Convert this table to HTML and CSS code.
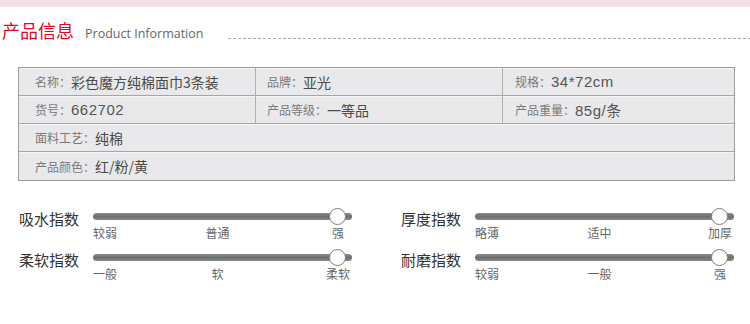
FILE: index.html
```html
<!DOCTYPE html>
<html lang="zh-CN">
<head>
<meta charset="utf-8">
<title>产品信息</title>
<link rel="stylesheet" href="styles.css">
</head>
<body>
<div class="band"></div>
<div class="heading">
  <h2 class="heading-cn">产品信息</h2>
  <span class="heading-en">Product Information</span>
  <span class="heading-rule"></span>
</div>

<div class="specs">
  <div class="cell col1"><span class="k">名称：</span><span class="v">彩色魔方纯棉面巾3条装</span></div>
  <div class="cell col2"><span class="k">品牌：</span><span class="v">亚光</span></div>
  <div class="cell col3"><span class="k">规格：</span><span class="v num">34*72cm</span></div>
  <div class="cell col1"><span class="k">货号：</span><span class="v num">662702</span></div>
  <div class="cell col2"><span class="k">产品等级：</span><span class="v">一等品</span></div>
  <div class="cell col3"><span class="k">产品重量：</span><span class="v num">85g/条</span></div>
  <div class="cell wide"><span class="k">面料工艺：</span><span class="v">纯棉</span></div>
  <div class="cell wide last"><span class="k">产品颜色：</span><span class="v">红/粉/黄</span></div>
</div>

<div class="meters">
  <div class="meter">
    <div class="meter-label">吸水指数</div>
    <div class="track"><span class="knob"></span></div>
    <div class="ticks"><span class="t-start">较弱</span><span class="t-mid">普通</span><span class="t-end">强</span></div>
  </div>
  <div class="meter">
    <div class="meter-label">厚度指数</div>
    <div class="track"><span class="knob"></span></div>
    <div class="ticks"><span class="t-start">略薄</span><span class="t-mid">适中</span><span class="t-end">加厚</span></div>
  </div>
  <div class="meter">
    <div class="meter-label">柔软指数</div>
    <div class="track"><span class="knob"></span></div>
    <div class="ticks"><span class="t-start">一般</span><span class="t-mid">软</span><span class="t-end">柔软</span></div>
  </div>
  <div class="meter">
    <div class="meter-label">耐磨指数</div>
    <div class="track"><span class="knob"></span></div>
    <div class="ticks"><span class="t-start">较弱</span><span class="t-mid">一般</span><span class="t-end">强</span></div>
  </div>
</div>
</body>
</html>
```

FILE: styles.css
```css
html, body {
  margin: 0;
  padding: 0;
  background: #ffffff;
}
body {
  width: 750px;
  height: 324px;
  overflow: hidden;
  font-family: "Noto Sans CJK SC", "Noto Sans", sans-serif;
  color: #333;
}

.band {
  height: 7px;
  background: #f2e1e4;
}

.heading {
  display: flex;
  align-items: baseline;
  margin: 13px 0 0 2px;
  height: 20px;
}
.heading-cn {
  margin: 0;
  font-size: 18px;
  line-height: 20px;
  font-weight: normal;
  color: #dc0a26;
}
.heading-en {
  margin-left: 11px;
  font-family: "Open Sans", "Noto Sans", sans-serif;
  font-size: 12.5px;
  line-height: 20px;
  color: #666;
}
.heading-rule {
  flex: 1;
  align-self: flex-end;
  height: 1px;
  margin: 0 0 1px 25px;
  background: linear-gradient(to right, #aaa 3px, transparent 3px) repeat-x;
  background-size: 5px 1px;
}

.specs {
  display: grid;
  grid-template-columns: 237px 247px 1fr;
  grid-auto-rows: 28px;
  width: 717px;
  box-sizing: border-box;
  margin: 27px 0 0 18px;
  border: 1px solid #9c9c9c;
  background: #e9e9eb;
}
.cell {
  display: flex;
  align-items: center;
  border-bottom: 1px solid #a6a6a6;
  box-shadow: inset 0 1px 0 #f6f6f7;
  white-space: nowrap;
}
.cell.last { border-bottom: none; }
.col1 { padding-left: 16px; border-right: 1px solid #b0b0b0; }
.col2 { padding-left: 11px; border-right: 1px solid #b0b0b0; }
.col3 { padding-left: 12px; }
.wide { grid-column: 1 / -1; padding-left: 16px; }
.k {
  font-size: 12px;
  color: #7a7a7a;
}
.v {
  font-size: 14px;
  color: #4a4a4a;
}
.v.num {
  font-family: "Liberation Sans", "Noto Sans CJK SC", sans-serif;
  font-size: 15px;
  letter-spacing: 0.5px;
  color: #555;
}

.meters {
  display: grid;
  grid-template-columns: 334px 334px;
  column-gap: 48px;
  row-gap: 9px;
  margin: 27px 0 0 19px;
}
.meter {
  display: grid;
  grid-template-columns: 74px 259px;
  grid-template-rows: 16px auto;
}
.meter-label {
  grid-row: 1;
  grid-column: 1;
  margin-top: 3px;
  font-size: 15px;
  line-height: 16px;
  color: #333;
}
.track {
  grid-row: 1;
  grid-column: 2;
  position: relative;
  align-self: center;
  height: 7px;
  border-radius: 4px;
  background: linear-gradient(#8c8c8c, #6f6f6f 50%, #888);
}
.knob {
  position: absolute;
  top: 50%;
  right: 6px;
  width: 15px;
  height: 15px;
  margin-top: -8.5px;
  border: 1px solid #7c7c7c;
  border-radius: 50%;
  background: #fff;
}
.ticks {
  grid-row: 2;
  grid-column: 2;
  display: grid;
  grid-template-columns: 1fr auto 1fr;
  margin-top: 2px;
  font-size: 12px;
  line-height: 14px;
  color: #666;
}
.t-start { justify-self: start; }
.t-mid { margin-right: 10px; }
.t-end { justify-self: end; width: 28px; text-align: center; }
```
